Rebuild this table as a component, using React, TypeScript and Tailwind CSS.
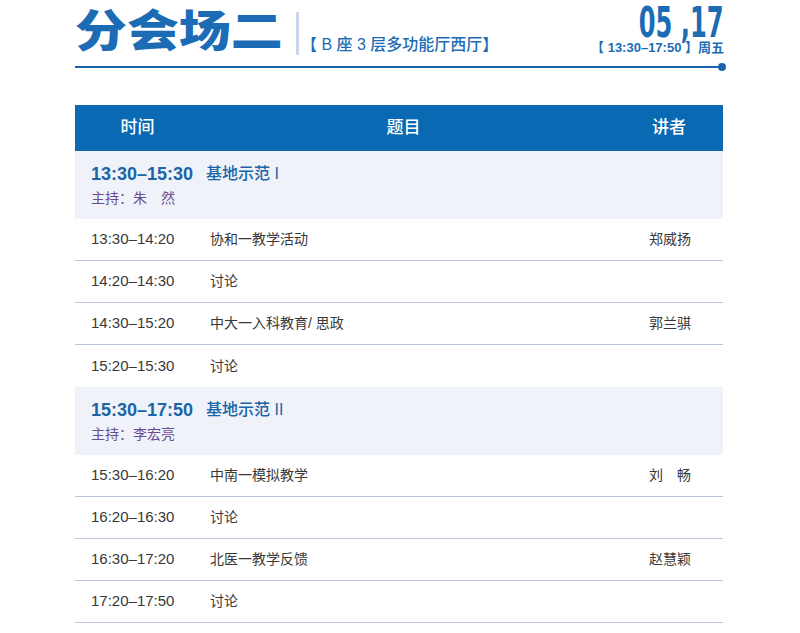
import React from 'react';

const cjk = { fontFamily: '"Liberation Sans", "Noto Sans CJK SC", sans-serif' };

type Row = { time: string; topic: string; speaker?: string };

const sessions: { time: string; title: string; host: string; rows: Row[] }[] = [
  {
    time: '13:30–15:30',
    title: '基地示范 I',
    host: '主持：朱　然',
    rows: [
      { time: '13:30–14:20', topic: '协和一教学活动', speaker: '郑威扬' },
      { time: '14:20–14:30', topic: '讨论' },
      { time: '14:30–15:20', topic: '中大一入科教育/ 思政', speaker: '郭兰骐' },
      { time: '15:20–15:30', topic: '讨论' },
    ],
  },
  {
    time: '15:30–17:50',
    title: '基地示范 II',
    host: '主持：李宏亮',
    rows: [
      { time: '15:30–16:20', topic: '中南一模拟教学', speaker: '刘　畅' },
      { time: '16:20–16:30', topic: '讨论' },
      { time: '16:30–17:20', topic: '北医一教学反馈', speaker: '赵慧颖' },
      { time: '17:20–17:50', topic: '讨论' },
    ],
  },
];

export default function App() {
  return (
    <div className="w-[800px] h-[633px] overflow-hidden bg-white" style={cjk}>
      <div className="mx-[75px]">
        {/* heading */}
        <div className="flex items-start justify-between h-[66px]">
          <div className="flex items-start">
            <h1
              className="mt-[6px] text-[44px] leading-[44px] font-black text-[#1b6cb5] whitespace-nowrap"
              style={{ fontFamily: '"Noto Sans CJK SC", sans-serif', transform: 'scaleX(1.18)', transformOrigin: 'left' }}
            >
              分会场二
            </h1>
            <div className="mt-[12px] ml-[45px] w-[3px] h-[43px] bg-[#ccd6ea]" />
            <div className="mt-[37px] ml-[2px] text-[16px] leading-none text-[#1b6cb5] font-medium whitespace-nowrap">
              【 B 座 3 层多功能厅西厅】
            </div>
          </div>
          <div className="flex flex-col items-end mr-[1px]">
            <div
              className="mt-[5px] text-[42px] leading-[36px] font-bold text-[#1b6cb5] whitespace-nowrap"
              style={{ fontFamily: '"DejaVu Sans Condensed", "DejaVu Sans", sans-serif', transform: 'scaleX(0.64)', transformOrigin: 'right' }}
            >
              05 ,17
            </div>
            <div className="text-[13px] leading-none font-bold text-[#1b6cb5] whitespace-nowrap">
              【 13:30–17:50 】周五
            </div>
          </div>
        </div>
        <div className="relative h-[2px] bg-[#1b62ac] mr-[3px]">
          <div className="absolute right-[-4px] top-[-3px] w-[8px] h-[8px] rounded-full bg-[#1b62ac]" />
        </div>

        {/* table */}
        <div className="mt-[37px] w-[648px]">
          <div className="flex items-center h-[46px] bg-[#0969b3] text-white text-[17px] font-medium">
            <div className="w-[135px] text-center pr-[10px]">时间</div>
            <div className="flex-1 text-center pr-[16px]">题目</div>
            <div className="w-[110px] text-center pl-[2px]">讲者</div>
          </div>
          {sessions.map((s) => (
            <div key={s.time}>
              <div className="h-[68px] bg-[#eff3f9] pl-[16px] pt-[12px]">
                <div className="flex items-center text-[#1a64a8] leading-[22px]">
                  <span className="text-[18px] font-bold">{s.time}</span>
                  <span className="ml-[13px] text-[16px] font-medium">{s.title}</span>
                </div>
                <div className="mt-[4px] text-[14px] leading-[18px] text-[#6b4a8f]">{s.host}</div>
              </div>
              {s.rows.map((r, i) => (
                <div
                  key={r.time}
                  className={
                    'flex items-center h-[42px] text-[#383838] ' +
                    (i === s.rows.length - 1 && s.time === '13:30–15:30' ? '' : 'border-b border-[#b9c6dd]')
                  }
                >
                  <div className="w-[135px] pl-[16px] text-[15px]">{r.time}</div>
                  <div className="flex-1 text-[14px]">{r.topic}</div>
                  <div className="w-[110px] text-center text-[14px] pl-[4px]">{r.speaker ?? ''}</div>
                </div>
              ))}
            </div>
          ))}
        </div>
      </div>
    </div>
  );
}
